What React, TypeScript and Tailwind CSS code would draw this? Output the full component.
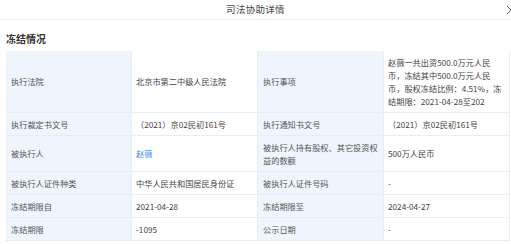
import React from 'react';

type Cell = { label: React.ReactNode; value: React.ReactNode };

const rows: Cell[][] = [
  [
    { label: '执行法院', value: '北京市第二中级人民法院' },
    {
      label: '执行事项',
      value: (
        <>
          赵薇一共出资500.0万元人民
          <br />
          币，冻结其中500.0万元人民
          <br />
          币，股权冻结比例：4.51%，冻
          <br />
          结期限：2021-04-28至202
        </>
      ),
    },
  ],
  [
    { label: '执行裁定书文号', value: '（2021）京02民初161号' },
    { label: '执行通知书文号', value: '（2021）京02民初161号' },
  ],
  [
    { label: '被执行人', value: <span className="text-[#3b87f0]">赵薇</span> },
    {
      label: (
        <>
          被执行人持有股权、其它投资权
          <br />
          益的数额
        </>
      ),
      value: '500万人民币',
    },
  ],
  [
    { label: '被执行人证件种类', value: '中华人民共和国居民身份证' },
    { label: '被执行人证件号码', value: '-' },
  ],
  [
    { label: '冻结期限自', value: '2021-04-28' },
    { label: '冻结期限至', value: '2024-04-27' },
  ],
  [
    { label: '冻结期限', value: '-1095' },
    { label: '公示日期', value: '-' },
  ],
];

const App: React.FC = () => {
  return (
    <div
      className="w-[511px] h-[244px] overflow-hidden bg-white text-[#333]"
      style={{ fontFamily: '"Noto Sans CJK SC", "Noto Sans", sans-serif' }}
    >
      {/* header */}
      <div className="relative h-[20px] flex items-center justify-center border-b border-[#f2f2f2]">
        <span className="text-[9.5px] text-[#444] tracking-[0.3px]">司法协助详情</span>
        <svg
          className="absolute right-[-5px] top-[5px]"
          width="10"
          height="10"
          viewBox="0 0 10 10"
          fill="none"
          stroke="#666"
          strokeWidth="1"
        >
          <path d="M1 1L9 9M9 1L1 9" />
        </svg>
      </div>

      <div className="px-[6px]">
        <div className="pt-[12px] pb-[6px] text-[10px] leading-[13px] font-bold text-[#333]">冻结情况</div>

        <div className="w-[504px] grid grid-cols-4 text-[8.2px] leading-[13px]">
          {rows.map((row, i) =>
            row.map((cell, j) => (
              <React.Fragment key={`${i}-${j}`}>
                <div className="flex items-center bg-[#eef5fc] border-b border-r border-[#e6edf4] pl-[5px] pr-[4px] py-[4.5px] text-[#555]">
                  <div>{cell.label}</div>
                </div>
                <div className="flex items-center bg-white border-b border-r border-[#e6edf4] pl-[4px] pr-[3px] py-[4.5px] text-[#444]">
                  <div>{cell.value}</div>
                </div>
              </React.Fragment>
            ))
          )}
        </div>
      </div>
    </div>
  );
};

export default App;
